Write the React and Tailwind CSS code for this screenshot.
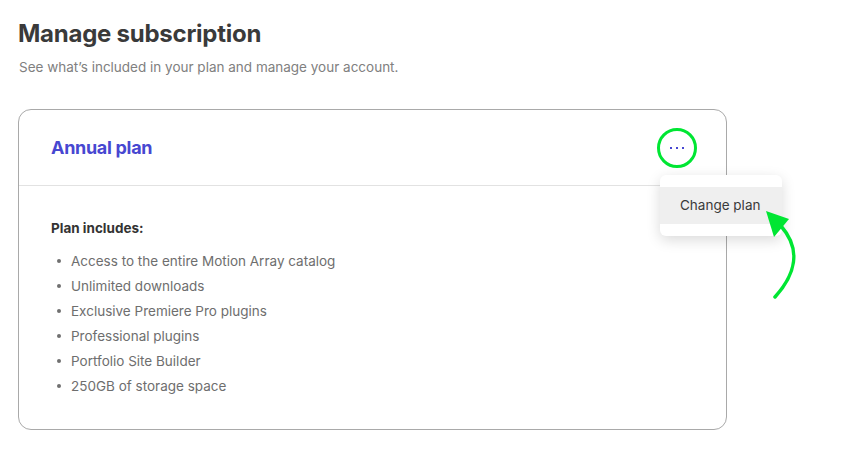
import React from 'react';

const features = [
  'Access to the entire Motion Array catalog',
  'Unlimited downloads',
  'Exclusive Premiere Pro plugins',
  'Professional plugins',
  'Portfolio Site Builder',
  '250GB of storage space',
];

export default function App() {
  return (
    <div className="relative w-[847px] h-[454px] bg-white overflow-hidden pl-[18px] pt-[20px]" style={{ fontFamily: 'Inter, "Liberation Sans", sans-serif' }}>
      <h1 className="text-[24px] leading-[28px] font-bold text-[#3a3a3a] tracking-[-0.25px]">Manage subscription</h1>
      <p className="mt-[10px] text-[13.5px] leading-[18px] text-[#808080] pl-[1px]">See what’s included in your plan and manage your account.</p>

      {/* Card */}
      <div className="relative mt-[33px] w-[709px] h-[321px] rounded-[13px] border border-[#a9a9a9]">
        <div className="h-[76px] flex items-center justify-between pl-[32px] pr-[29px] border-b border-[#e2e2e2]">
          <h2 className="text-[18px] font-bold text-[#4747d1] tracking-[-0.3px]">Annual plan</h2>
          <button className="w-[40px] h-[40px] rounded-full border-[3px] border-[#00e633] flex items-center justify-center gap-[4px]">
            <span className="w-[2px] h-[2px] bg-[#4747d1]" />
            <span className="w-[2px] h-[2px] bg-[#4747d1]" />
            <span className="w-[2px] h-[2px] bg-[#4747d1]" />
          </button>
        </div>

        <div className="pl-[32px] pt-[33px]">
          <p className="text-[13.5px] leading-[18px] font-bold text-[#333333]">Plan includes:</p>
          <ul className="mt-[15px] flex flex-col gap-[7px]">
            {features.map((f) => (
              <li key={f} className="flex items-center text-[13.5px] leading-[18px] text-[#6e6e6e]">
                <span className="ml-[6px] mr-[10px] w-[4px] h-[4px] rounded-full bg-[#707070]" />
                {f}
              </li>
            ))}
          </ul>
        </div>

        {/* Dropdown */}
        <div className="absolute left-[641px] top-[65px] w-[122px] py-[12px] bg-white rounded-[6px] shadow-[0_4px_14px_rgba(0,0,0,0.15)]">
          <div className="h-[37px] bg-[#efefef] flex items-center pl-[20px] text-[13.5px] text-[#3a3a3a]">Change plan</div>
        </div>
      </div>

      {/* Green arrow annotation */}
      <svg className="absolute left-0 top-0" width="847" height="454" viewBox="0 0 847 454">
        <path d="M775 297 C 795 275, 802 250, 781 226" fill="none" stroke="#00e633" strokeWidth="3.5" strokeLinecap="round" />
        <polygon points="766,211 789,219 774,237" fill="#00e633" />
      </svg>
    </div>
  );
}
